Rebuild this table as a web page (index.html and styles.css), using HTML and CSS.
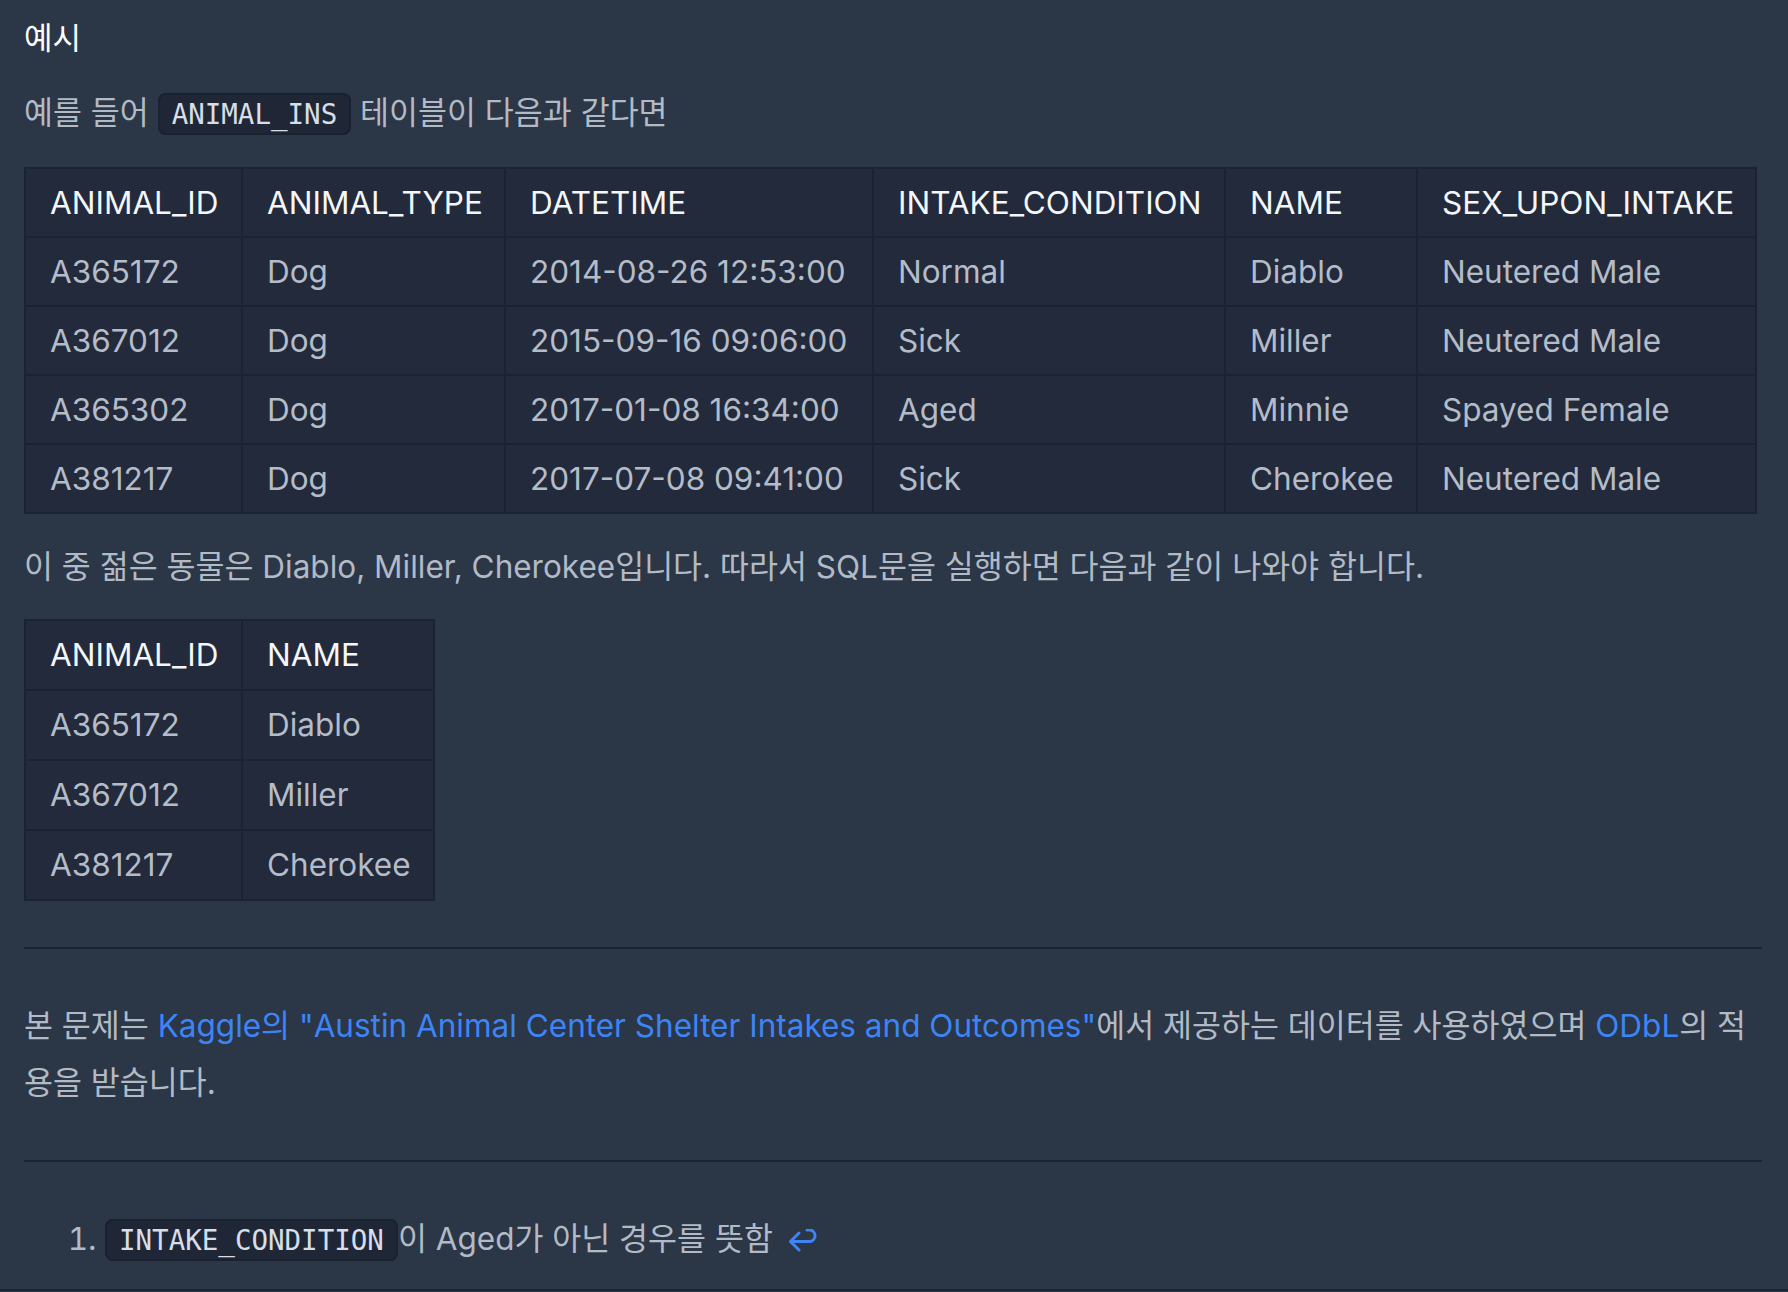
FILE: index.html
```html
<!DOCTYPE html>
<html lang="ko">
<head>
<meta charset="utf-8">
<title>예시</title>
<link rel="stylesheet" href="styles.css">
</head>
<body>
<main class="content">
  <h5 class="heading">예시</h5>
  <p class="para">예를 들어 <code class="code">ANIMAL_INS</code> 테이블이 다음과 같다면</p>
  <table class="table table-wide">
    <colgroup>
      <col class="c1"><col class="c2"><col class="c3"><col class="c4"><col class="c5"><col class="c6">
    </colgroup>
    <thead>
      <tr><th>ANIMAL_ID</th><th>ANIMAL_TYPE</th><th>DATETIME</th><th>INTAKE_CONDITION</th><th>NAME</th><th>SEX_UPON_INTAKE</th></tr>
    </thead>
    <tbody>
      <tr><td>A365172</td><td>Dog</td><td>2014-08-26 12:53:00</td><td>Normal</td><td>Diablo</td><td>Neutered Male</td></tr>
      <tr><td>A367012</td><td>Dog</td><td>2015-09-16 09:06:00</td><td>Sick</td><td>Miller</td><td>Neutered Male</td></tr>
      <tr><td>A365302</td><td>Dog</td><td>2017-01-08 16:34:00</td><td>Aged</td><td>Minnie</td><td>Spayed Female</td></tr>
      <tr><td>A381217</td><td>Dog</td><td>2017-07-08 09:41:00</td><td>Sick</td><td>Cherokee</td><td>Neutered Male</td></tr>
    </tbody>
  </table>
  <p class="para">이 중 젊은 동물은 Diablo, Miller, Cherokee입니다. 따라서 SQL문을 실행하면 다음과 같이 나와야 합니다.</p>
  <table class="table table-small">
    <colgroup><col class="s1"><col class="s2"></colgroup>
    <thead>
      <tr><th>ANIMAL_ID</th><th>NAME</th></tr>
    </thead>
    <tbody>
      <tr><td>A365172</td><td>Diablo</td></tr>
      <tr><td>A367012</td><td>Miller</td></tr>
      <tr><td>A381217</td><td>Cherokee</td></tr>
    </tbody>
  </table>
  <hr class="rule">
  <p class="para">본 문제는 <a class="link" href="#">Kaggle의 "Austin Animal Center Shelter Intakes and Outcomes"</a>에서 제공하는 데이터를 사용하였으며 <a class="link" href="#">ODbL</a>의 적용을 받습니다.</p>
  <hr class="rule rule-notes">
  <ol class="notes">
    <li class="note"><code class="code">INTAKE_CONDITION</code>이 Aged가 아닌 경우를 뜻함 <a class="back" href="#" aria-label="back"><svg class="back-icon" viewBox="0 0 30 24" width="30" height="24"><path d="M10 4 L1.5 12.5 L10 21 M1.5 12.5 H21 A5.8 5.8 0 0 0 21 1 H18" fill="none" stroke="currentColor" stroke-width="3" stroke-linecap="round" stroke-linejoin="round"/></svg></a></li>
  </ol>
</main>
<div class="bottom-line"></div>
</body>
</html>
```
FILE: styles.css
```css
html, body {
  margin: 0;
  padding: 0;
}
body {
  background: #2b3647;
  color: #b2bac6;
  font-family: "Inter", "Noto Sans CJK KR", sans-serif;
  font-size: 31.5px;
  line-height: 57px;
  overflow: hidden;
}
.content {
  padding: 9px 26px 0 24px;
}
.heading {
  margin: 0 0 18px;
  font-size: 31px;
  line-height: 57px;
  font-weight: 400;
  color: #ffffff;
}
.para {
  margin: 0 0 24px;
}
.code {
  font-family: "DejaVu Sans Mono", "Liberation Mono", monospace;
  font-size: 27.5px;
  color: #d8dee7;
  background: #1f2737;
  border: 2px solid #1a2130;
  border-radius: 8px;
  padding: 3px 12px;
}
.table {
  border-collapse: collapse;
  background: #222a3b;
  margin: 0 0 24px;
  line-height: 48px;
}
.table th, .table td {
  border: 2px solid #1b2231;
  padding: 10px 22px 9px 24px;
  text-align: left;
  white-space: nowrap;
}
.table th {
  font-weight: 400;
  color: #f4f6f9;
}
.table td {
  color: #b4bcc8;
}
.table-wide {
  table-layout: fixed;
  width: 1731px;
}
.c1 { width: 217px; }
.c2 { width: 263px; }
.c3 { width: 368px; }
.c4 { width: 352px; }
.c5 { width: 192px; }
.c6 { width: 339px; }
.table-small {
  table-layout: fixed;
  width: 409px;
}
.s1 { width: 217px; }
.s2 { width: 192px; }
.table-small td, .table-small th {
  padding-top: 10px;
  padding-bottom: 10px;
}
.rule {
  border: 0;
  border-top: 2px solid #1c2332;
  margin: 46px 0 48px;
}
.rule-notes {
  margin-top: 49px;
}
.link {
  color: #3d85f5;
  text-decoration: none;
}
.notes {
  margin: 0;
  padding: 0 0 0 81px;
}
.note {
  line-height: 57px;
}
.note::marker {
  color: #b2bac6;
}
.back {
  color: #3d85f5;
  text-decoration: none;
  margin-left: 7px;
}
.back-icon {
  vertical-align: -3px;
}
.bottom-line {
  margin-top: 20px;
  border-top: 2px solid #1c2332;
}
```
